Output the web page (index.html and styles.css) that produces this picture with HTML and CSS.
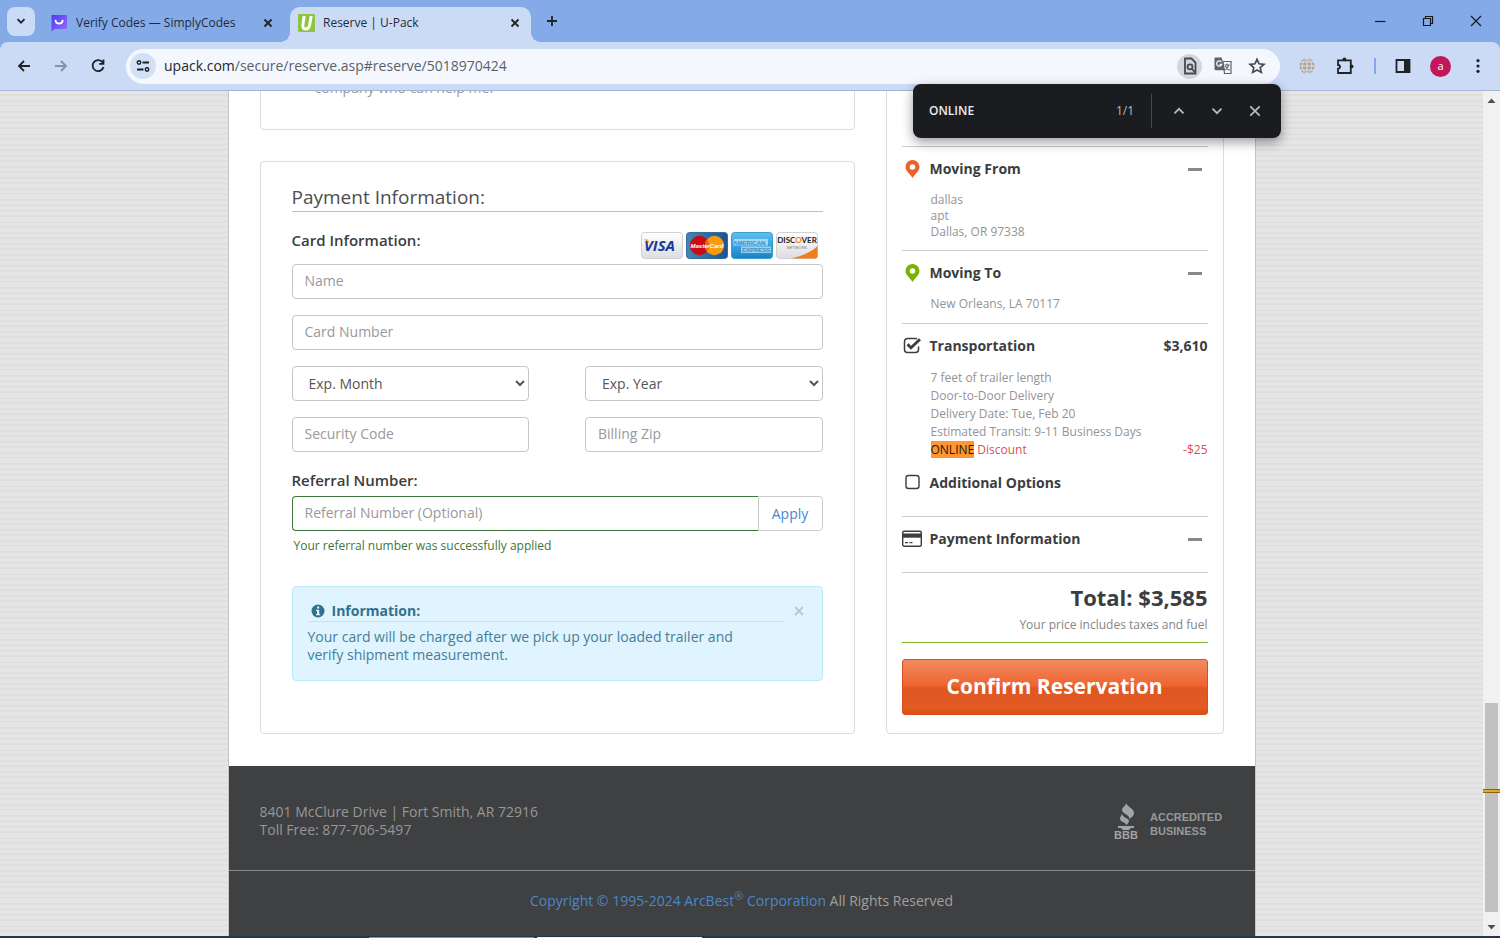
FILE: index.html
```html
<!DOCTYPE html>
<html lang="en">
<head>
<meta charset="utf-8">
<title>Reserve | U-Pack</title>
<link rel="stylesheet" href="styles.css">
</head>
<body>
<header class="browser">
  <div class="tabstrip">
    <button class="tab-search" aria-label="Search tabs"><svg width="12" height="12" viewBox="0 0 12 12"><path d="M2.500 4.200 6 7.700 9.500 4.200" class="ln2"/></svg></button>
    <div class="tab">
      <svg width="18" height="18" viewBox="0 0 18 18"><defs><linearGradient id="sc" x1="0" y1="0" x2="1" y2="1"><stop offset="0" stop-color="#4a3df0"/><stop offset="1" stop-color="#9a6bff"/></linearGradient></defs><path d="M1.500 1H16a1 1 0 0 1 1 1v12a1 1 0 0 1-1 1H5l-3.500 2.500z" fill="url(#sc)"/><path d="M5.500 6.500c.7 4.200 6.500 4.200 7.200 0" fill="none" stroke="#fff" stroke-width="1.700" stroke-linecap="round"/></svg>
      <span class="tab-title">Verify Codes — SimplyCodes</span>
      <button class="tab-close" aria-label="Close tab"><svg width="12" height="12" viewBox="0 0 12 12"><path d="M2.500 2.500l7 7m0-7l-7 7" class="ln2"/></svg></button>
    </div>
    <div class="tab active">
      <svg width="17" height="18" viewBox="0 0 17 18"><rect width="17" height="18" rx="1" fill="#8cc63f"/><path d="M6.200 2 5 10c-.6 3.400.3 5 2.800 5s3.500-1.600 4-5l1.400-8" fill="none" stroke="#fff" stroke-width="3"/></svg>
      <span class="tab-title">Reserve | U-Pack</span>
      <button class="tab-close" aria-label="Close tab"><svg width="12" height="12" viewBox="0 0 12 12"><path d="M2.500 2.500l7 7m0-7l-7 7" class="ln2"/></svg></button>
    </div>
    <button class="new-tab" aria-label="New tab"><svg width="14" height="14" viewBox="0 0 14 14"><path d="M7 2v10M2 7h10" class="ln2"/></svg></button>
    <div class="window-buttons">
      <button aria-label="Minimize"><svg width="12" height="12" viewBox="0 0 12 12"><path d="M1 6.500h10.500" class="ln1"/></svg></button>
      <button aria-label="Restore"><svg width="12" height="12" viewBox="0 0 12 12"><path d="M1.500 3.500h7v7h-7zM3.500 3.500v-2h7v7h-2" class="ln1"/></svg></button>
      <button aria-label="Close"><svg width="12" height="12" viewBox="0 0 12 12"><path d="M1 1l10 10M11 1 1 11" class="ln1"/></svg></button>
    </div>
  </div>
  <div class="toolbar">
    <div class="nav">
      <button aria-label="Back"><svg width="16" height="16" viewBox="0 0 16 16"><path d="M14 8H3M8 3 3 8l5 5" class="ln2"/></svg></button>
      <button class="dim" aria-label="Forward"><svg width="16" height="16" viewBox="0 0 16 16"><path d="M2 8h11M8 3l5 5-5 5" class="ln2"/></svg></button>
      <button aria-label="Reload"><svg width="16" height="16" viewBox="0 0 16 16"><path d="M12.700 4.500A5.500 5.500 0 1 0 13.500 9M13.500 1.500v4.300H9.200" class="ln2"/></svg></button>
    </div>
    <div class="omnibox">
      <button class="site-info" aria-label="Site information"><svg width="16" height="16" viewBox="0 0 16 16"><path d="M7.500 4.500H14M2 11.500h6.500" class="ln2"/><circle cx="4" cy="4.500" r="1.700" class="ln15"/><circle cx="12" cy="11.500" r="1.700" class="ln15"/></svg></button>
      <span class="url">upack.com<span>/secure/reserve.asp#reserve/5018970424</span></span>
      <button class="find-icon" aria-label="Find in page"><svg width="18" height="18" viewBox="0 0 18 18"><path d="M10.500 1.500H4v15h10.500v-11zM10.800 11.800l3.500 3.700" class="ln2g"/><circle cx="9" cy="9.800" r="2.500" class="ln2g"/></svg></button>
      <button class="translate" aria-label="Translate"><svg width="18" height="18" viewBox="0 0 18 18"><path d="M9 4.500h8v12h-6.500z" fill="none" stroke="#5f6368" stroke-width="1.200"/><path d="M1 .5h6.700l3.300 12.800H2a1.500 1.500 0 0 1-1.500-1.500V1z" fill="#5f6368"/><path d="M7.300 5A2.600 2.600 0 1 0 7.700 7.300H5.500" fill="none" stroke="#f3f7fd" stroke-width="1.300"/><path d="M10.500 8h5.200M13 6.500V8m1.700 0c-.4 2.200-2 4-3.300 5m0-4c.8 1.900 2.500 3.300 4.300 4.300" fill="none" stroke="#5f6368" stroke-width="1.200"/></svg></button>
      <button class="star" aria-label="Bookmark"><svg width="18" height="18" viewBox="0 0 18 18"><path d="M9 2.300l2 4.500 4.900.5-3.700 3.300 1.100 4.800L9 12.900l-4.300 2.500 1.100-4.800-3.700-3.300 4.900-.5z" fill="none" stroke="#474b50" stroke-width="1.700"/></svg></button>
    </div>
    <div class="extensions">
      <button aria-label="Globe extension"><svg width="18" height="18" viewBox="0 0 18 18"><circle cx="9" cy="9" r="7.700" fill="#a9a69e"/><path d="M9 1v16M1 9h16M2 5h14M2 13h14M9 1C2.500 5 2.500 13 9 17M9 1c6.500 4 6.500 12 0 16" fill="none" stroke="#e6e8ea" stroke-width=".9"/></svg></button>
      <button aria-label="Extensions"><svg width="20" height="20" viewBox="0 0 20 20"><path d="M3 4.300h12.800v12.700H3v-4.400c2.700-.2 2.700-3.400 0-3.600z" class="ln2"/><circle cx="9.400" cy="3.400" r="1.900" class="solid"/><circle cx="16.600" cy="10.400" r="1.900" class="solid"/></svg></button>
      <span class="sep"></span>
      <button aria-label="Side panel"><svg width="16" height="16" viewBox="0 0 16 16"><path d="M1.500 2h13v12h-13z" class="ln2"/><path d="M9 2h5.500v12H9z" class="solid"/></svg></button>
      <button class="avatar" aria-label="Profile">a</button>
      <button aria-label="Menu"><svg width="16" height="16" viewBox="0 0 16 16" class="solid"><circle cx="8" cy="2.700" r="1.600"/><circle cx="8" cy="8" r="1.600"/><circle cx="8" cy="13.300" r="1.600"/></svg></button>
    </div>
  </div>
  <div class="findbar">
    <input class="find-text" aria-label="Find" value="ONLINE">
    <span class="find-count">1/1</span>
    <button aria-label="Previous"><svg width="14" height="14" viewBox="0 0 14 14"><path d="M2.500 9.300 7 4.800l4.500 4.500"/></svg></button>
    <button aria-label="Next"><svg width="14" height="14" viewBox="0 0 14 14"><path d="M2.500 4.700 7 9.200l4.500-4.500"/></svg></button>
    <button aria-label="Close find bar"><svg width="14" height="14" viewBox="0 0 14 14"><path d="M2.300 2.300l9.400 9.400m0-9.400-9.400 9.400"/></svg></button>
  </div>
</header>

<div class="viewport">
  <div class="canvas">
    <div class="page">
      <div class="columns">
        <main class="forms">
          <section class="card previous"><p>company who can help me.</p></section>
          <section class="card payment">
            <h2>Payment Information:</h2>
            <div class="card-row">
              <h3>Card Information:</h3>
              <div class="logos">
                <svg width="42" height="27" viewBox="0 0 42 27"><defs><linearGradient id="gr" x1="0" y1="0" x2="0" y2="1"><stop offset="0" stop-color="#fff"/><stop offset="1" stop-color="#dcdde0"/></linearGradient></defs><rect x=".5" y=".5" width="41" height="26" rx="3" fill="url(#gr)" stroke="#cfd1d4"/><text x="3" y="19" class="visa">VISA</text><path d="M2.500 7.500H7l2 6c-1-3-3-5-6.500-6z" fill="#f0a01e"/></svg>
                <svg width="42" height="27" viewBox="0 0 42 27"><defs><linearGradient id="mc"><stop offset="0" stop-color="#4387b5"/><stop offset="1" stop-color="#1c5391"/></linearGradient></defs><rect x=".5" y=".5" width="41" height="26" rx="3" fill="url(#mc)" stroke="#2f6da3"/><circle cx="13.500" cy="13.500" r="9.700" fill="#cc0a12"/><circle cx="28.500" cy="13.500" r="9.700" fill="#fb9a0c"/><path d="M21 7.300a9.700 9.700 0 0 1 0 12.400 9.700 9.700 0 0 1 0-12.400" fill="#e56a12"/><text x="21" y="16" text-anchor="middle" class="master">MasterCard</text></svg>
                <svg width="42" height="27" viewBox="0 0 42 27"><defs><linearGradient id="ax" x1="0" y1="0" x2="0" y2="1"><stop offset="0" stop-color="#5fc0ee"/><stop offset="1" stop-color="#1683c9"/></linearGradient></defs><rect x=".5" y=".5" width="41" height="26" rx="3" fill="url(#ax)" stroke="#3b9bd3"/><path d="M3 7h34v6.500H2zM10 14.500h30V21H10z" fill="#d6eefa" opacity=".65"/><text x="2" y="13" class="amex">AMERICAN</text><text x="11" y="20" class="amex">EXPRESS</text></svg>
                <svg width="42" height="27" viewBox="0 0 42 27"><rect x=".5" y=".5" width="41" height="26" rx="3" fill="url(#gr)" stroke="#cfd1d4"/><path d="M15 26.500C27 24 37 19 41.500 14v10a2.500 2.500 0 0 1-2.500 2.500z" fill="#ef7d1a"/><text x="21" y="11" text-anchor="middle" class="disc">DISC<tspan fill="#ef7d1a">O</tspan>VER</text><text x="21" y="17" text-anchor="middle" class="net">NETWORK</text></svg>
              </div>
            </div>
            <div class="fields">
              <input class="field wide" aria-label="Name" placeholder="Name">
              <input class="field wide" aria-label="Card Number" placeholder="Card Number">
              <select class="field" aria-label="Exp. Month"><option>Exp. Month</option></select>
              <select class="field" aria-label="Exp. Year"><option>Exp. Year</option></select>
              <input class="field" aria-label="Security Code" placeholder="Security Code">
              <input class="field" aria-label="Billing Zip" placeholder="Billing Zip">
            </div>
            <label class="ref-label" for="ref">Referral Number:</label>
            <div class="ref-group">
              <input id="ref" class="field" placeholder="Referral Number (Optional)">
              <button class="apply">Apply</button>
            </div>
            <p class="success">Your referral number was successfully applied</p>
            <div class="alert">
              <div class="alert-body">
                <h4><svg width="14" height="14" viewBox="0 0 14 14"><circle cx="7" cy="7" r="6.500" fill="#31708f"/><path d="M6 2.500h2.200v2H6zM5 5.700h3.200v4.200h1v1.300H5V9.900h1V7H5z" fill="#dff4fe"/></svg>Information:</h4>
                <p>Your card will be charged after we pick up your loaded trailer and verify shipment measurement.</p>
              </div>
              <button class="alert-close" aria-label="Dismiss"><svg width="10" height="10" viewBox="0 0 10 10"><path d="M1 1l8 8m0-8-8 8" stroke="#b2cbd7" stroke-width="2"/></svg></button>
            </div>
          </section>
        </main>
        <aside class="card summary">
          <section>
            <h3><svg width="20" height="20" viewBox="0 0 20 20"><path d="M10.500 1a7 7 0 0 0-7 7c0 4 5 7.500 7 11 2-3.500 7-7 7-11a7 7 0 0 0-7-7z" fill="#e9622b"/><circle cx="10.500" cy="8" r="2.800" fill="#fff"/></svg>Moving From<button class="minus" aria-label="Collapse Moving From"></button></h3>
            <p>dallas<br>apt<br>Dallas, OR 97338</p>
          </section>
          <section class="to">
            <h3><svg width="20" height="20" viewBox="0 0 20 20"><path d="M10.500 1a7 7 0 0 0-7 7c0 4 5 7.500 7 11 2-3.500 7-7 7-11a7 7 0 0 0-7-7z" fill="#77b300"/><circle cx="10.500" cy="8" r="2.800" fill="#fff"/></svg>Moving To<button class="minus" aria-label="Collapse Moving To"></button></h3>
            <p>New Orleans, LA 70117</p>
          </section>
          <section class="transport">
            <h3><svg width="20" height="20" viewBox="0 0 20 20"><path d="M16.500 10.500v3a3 3 0 0 1-3 3h-8a3 3 0 0 1-3-3v-8a3 3 0 0 1 3-3h8c.7 0 1 .1 1.500.3" fill="none" stroke="#3b3d40" stroke-width="1.500"/><path d="M5.500 8.300 9 11.800l9-8.500" fill="none" stroke="#3b3d40" stroke-width="2.800"/></svg>Transportation<span class="price">$3,610</span></h3>
            <ul>
              <li>7 feet of trailer length</li>
              <li>Door-to-Door Delivery</li>
              <li>Delivery Date: Tue, Feb 20</li>
              <li>Estimated Transit: 9-11 Business Days</li>
              <li class="discount"><span><mark>ONLINE</mark> Discount</span><span>-$25</span></li>
            </ul>
            <h3><svg width="20" height="20" viewBox="0 0 20 20"><rect x="4" y="2.500" width="13" height="13" rx="2.500" fill="none" stroke="#3b3d40" stroke-width="1.400"/></svg>Additional Options</h3>
          </section>
          <section class="pay">
            <h3><svg width="20" height="20" viewBox="0 0 20 20"><rect x=".7" y="2.200" width="18.600" height="15" rx="1.500" fill="#fff" stroke="#3b3d40" stroke-width="1.400"/><path d="M1 4.500h18v4.200H1z" fill="#3b3d40"/><path d="M3 13.700h3m1.500 0h3" stroke="#3b3d40" stroke-width="1.300"/></svg>Payment Information<button class="minus" aria-label="Collapse Payment Information"></button></h3>
          </section>
          <section class="total">
            <strong>Total: $3,585</strong>
            <small>Your price includes taxes and fuel</small>
          </section>
          <button class="confirm">Confirm Reservation</button>
        </aside>
      </div>
      <footer>
        <div class="foot-top">
          <address>8401 McClure Drive | Fort Smith, AR 72916<br>Toll Free: 877-706-5497</address>
          <svg width="110" height="40" viewBox="0 0 110 40"><g fill="#a3a4a5"><path d="M12 0c1 4 8 5 8 10 0 3-3 5-5 6 2-4-7-5-7-9 0-3 4-4 4-7z"/><path d="M8 11c1 4 7 4 7 7 0 1.500-1.500 3-3 4 0-3-6-3-6-6 0-2 1-3 2-5z"/><path d="M4 23h16v2h-3l-2 2H9l-2-2H4z"/></g><text x="0" y="36" class="bbb">BBB</text><text x="36" y="18" class="acc">ACCREDITED</text><text x="36" y="32" class="acc">BUSINESS</text></svg>
        </div>
        <p class="copy"><a href="#">Copyright © 1995-2024 ArcBest<sup>®</sup> Corporation</a> All Rights Reserved</p>
      </footer>
    </div>
  </div>
  <div class="scrollbar">
    <svg width="17" height="17" viewBox="0 0 17 17"><path d="M4.500 12h8l-4-4.500z" fill="#505050"/></svg>
    <div class="track"><div class="thumb"></div><div class="match"></div></div>
    <svg width="17" height="17" viewBox="0 0 17 17"><path d="M4.500 6h8l-4 4.500z" fill="#505050"/></svg>
  </div>
</div>
<div class="taskbar"><span></span><span class="current"></span></div>
</body>
</html>
```

FILE: styles.css
```css
* { box-sizing: border-box; }
body {
  margin: 0;
  height: 100vh;
  display: flex;
  flex-direction: column;
  overflow: hidden;
  font: 14px/18px "Open Sans", "Noto Sans", sans-serif;
  color: #3b3d40;
}
button { border: 0; padding: 0; background: none; font: inherit; color: inherit; display: grid; place-items: center; }
h2, h3, h4, p, ul { margin: 0; padding: 0; }
svg { display: block; flex: none; }

/* Browser frame */
.browser { position: relative; z-index: 2; flex: none; background: #84abe8; }
.ln1 { fill: none; stroke: #17191c; stroke-width: 1.2; }
.ln15 { fill: none; stroke: #202226; stroke-width: 1.5; }
.ln2 { fill: none; stroke: #202226; stroke-width: 1.8; }
.ln2g { fill: none; stroke: #474b50; stroke-width: 1.8; }
.solid { fill: #202226; }
.tabstrip { height: 42px; display: flex; align-items: center; padding-left: 7px; font-size: 12px; color: #1f2a3c; }
.tab-search { width: 28px; height: 29px; border-radius: 8px; background: #cbdbf5; }
.tab { width: 255px; height: 35px; align-self: flex-end; display: flex; align-items: center; gap: 8px; padding: 0 16px 4px 15px; }
.tab-title { flex: 1; white-space: nowrap; }
.tab.active { width: 241px; padding: 0 10px 4px 8px; background: #cbdbf5; border-radius: 10px 10px 0 0; position: relative; }
.tab.active::before, .tab.active::after { content: ""; position: absolute; bottom: 0; width: 10px; height: 10px; }
.tab.active::before { left: -10px; background: radial-gradient(circle at 0 0, transparent 10px, #cbdbf5 10px); }
.tab.active::after { right: -10px; background: radial-gradient(circle at 100% 0, transparent 10px, #cbdbf5 10px); }
.new-tab { width: 28px; height: 28px; margin-left: 7px; }
.window-buttons { margin-left: auto; display: flex; }
.window-buttons button { width: 48px; height: 28px; }

.toolbar { height: 49px; display: flex; align-items: center; background: #cbdbf5; border-bottom: 1px solid #a3b5d6; border-radius: 8px 8px 0 0; padding: 0 14px 0 5px; }
.nav { display: flex; }
.nav button { width: 37px; height: 30px; }
.nav .dim { opacity: .4; }
.omnibox { flex: 1; height: 35px; margin-left: 10px; border-radius: 18px; background: #f4f8fe; display: flex; align-items: center; padding: 0 11px 0 4px; }
.site-info { width: 26px; height: 26px; border-radius: 50%; background: #d3e1f7; }
.url { flex: 1; margin-left: 8px; color: #24272b; }
.url span { color: #5b5f66; }
.omnibox button + button { margin-left: 9px; }
.find-icon { width: 25px; height: 25px; border-radius: 50%; background: #d3d6db; }
.translate { width: 24px; height: 24px; }
.star { width: 25px; height: 25px; }
.extensions { display: flex; align-items: center; margin-left: 18px; gap: 19px; }
.sep { width: 2px; height: 16px; background: #84abe8; }
.extensions .avatar { width: 21px; height: 21px; border-radius: 50%; background: #c2185b; color: #fff; font-size: 11px; line-height: 14px; }

.findbar { position: absolute; right: 219px; top: 84px; width: 368px; height: 54px; display: flex; align-items: center; padding: 0 7px 0 16px; border-radius: 8px; background: #1b1c1f; box-shadow: 0 4px 12px rgba(0, 0, 0, .4); color: #b9bcc0; font-size: 12px; }
.find-text { flex: 1; min-width: 0; border: 0; padding: 0; background: none; color: #eceef0; font: 600 12px/18px "Open Sans", sans-serif; }
.find-count { padding-right: 17px; margin-right: 8px; border-right: 1px solid #45484c; line-height: 34px; }
.findbar button { width: 38px; height: 38px; }
.findbar path { fill: none; stroke: #b9bcc0; stroke-width: 1.7; }

/* Scrolled page */
.viewport { flex: 1; min-height: 0; display: flex; overflow: hidden; }
.canvas { flex: 1; overflow: hidden; background: repeating-linear-gradient(#e5e5e5 0 3px, #dfdfdf 3px 5px, #e5e5e5 5px 9px, #dfdfdf 9px 11px); }
.page { max-width: 1028px; min-height: 100%; margin: 0 auto; background: #fff; border: solid #c4c4c4; border-width: 0 1px; display: flex; flex-direction: column; }
.columns { display: grid; grid-template-columns: 595fr 338fr; gap: 31px; margin-top: -20px; padding: 0 31px 32px; }
.forms { display: flex; flex-direction: column; gap: 31px; }
.card { border: 1px solid #dcdcdc; border-radius: 4px; }
.previous { padding: 7px 54px 32px; color: #999; }
.payment { flex: 1; padding: 21px 31px 31px; }
h2 { font-size: 19px; line-height: 28px; font-weight: 400; color: #4c4e50; border-bottom: 1px solid #bfbfbf; }
h3, .ref-label { font-size: 15px; line-height: 20px; font-weight: 600; }
.card-row { display: flex; justify-content: space-between; align-items: flex-start; padding: 18px 5px 5px 0; }
.logos { display: flex; gap: 3px; padding-top: 2px; }
.visa { font: italic 700 15px "Open Sans", sans-serif; fill: #15399b; }
.master { font: italic 700 6px "Liberation Sans", sans-serif; fill: #fff; }
.amex { font: 700 6px "Liberation Sans", sans-serif; fill: #2a93d2; }
.disc { font: 700 8px Lato, sans-serif; fill: #222; }
.net { font: 4px "Liberation Sans", sans-serif; fill: #777; }
.fields { display: grid; grid-template-columns: 1fr 1fr; gap: 16px 56px; margin-bottom: 18px; }
.wide { grid-column: span 2; }
.field { width: 100%; height: 35px; border: 1px solid #c6c6c6; border-radius: 4px; padding: 0 12px 2px; background: #fff; color: #555; font: 14px/18px "Open Sans", sans-serif; }
select.field { padding-bottom: 0; }
.field::placeholder { color: #999; opacity: 1; }
.ref-label { display: block; margin-bottom: 6px; }
.ref-group { display: flex; }
.ref-group .field { flex: 1; border-color: #3c763d; border-right: 0; border-radius: 4px 0 0 4px; }
.apply { width: 65px; border: 1px solid #ccc; border-radius: 0 4px 4px 0; color: #4a86cf; }
.success { margin: 6px 2px 31px; font-size: 12px; color: #3c763d; }
.alert { display: flex; align-items: flex-start; padding: 15px 15px 16px; border: 1px solid #bcebf5; border-radius: 4px; background: #dff4fe; color: #31708f; }
.alert-body { flex: 1; }
.alert h4 { display: flex; align-items: center; gap: 7px; padding: 0 3px 1px; margin-bottom: 6px; font-size: 14px; line-height: 18px; border-bottom: 1px solid #c2e3ef; }
.alert p { padding-right: 24px; color: #457e99; }
.alert-close { width: 16px; height: 18px; margin-left: 7px; }

.summary { padding: 74px 15px 18px; display: flex; flex-direction: column; }
.summary section { border-top: 1px solid #ccc; padding: 12px 0 10px; }
.summary h3 { display: flex; align-items: center; gap: 8px; font-size: 14px; font-weight: 700; }
.minus { width: 14px; height: 3px; margin: 0 6px 0 auto; background: #888; }
.price { margin-left: auto; }
.summary p, .summary ul { margin: 13px 0 0 29px; font-size: 12px; line-height: 16px; color: #949494; }
.summary ul { margin-bottom: 14px; list-style: none; line-height: 18px; }
.discount { display: flex; justify-content: space-between; color: #d9534f; }
mark { background: #ff9632; color: #26180a; }
.summary .to { padding-bottom: 11px; }
.summary .transport, .summary .pay { padding-bottom: 23px; }
.summary .total { padding: 9px 0 8px; margin-bottom: 16px; border-bottom: 1px solid #7fb32c; display: flex; flex-direction: column; gap: 4px; text-align: right; }
.total strong { font-size: 22px; line-height: 30px; }
.total small { font-size: 12px; color: #858585; }
.confirm { height: 56px; border: 1px solid #d4501c; border-radius: 3px; background: linear-gradient(#f28a60, #ee6430 48%, #de5721 52%, #e35a25 88%, #d94f12); color: #fff; font-size: 21px; font-weight: 700; padding-bottom: 2px; }

footer { flex: 1; background: #3f4041; color: #979797; }
.foot-top { display: flex; justify-content: space-between; align-items: flex-start; padding: 37px 31px 27px; border-bottom: 1px solid #8b8b8b; }
address { font-style: normal; }
.copy { padding: 21px 0 26px; text-align: center; color: #a0a0a0; }
.copy a { color: #4a88c8; text-decoration: none; }
sup { font-size: 11px; line-height: 0; }
.bbb { font: 700 11px "Liberation Sans", sans-serif; fill: #a3a4a5; }
.acc { font: 700 11px "Liberation Sans", sans-serif; fill: #979899; }

.scrollbar { width: 17px; display: flex; flex-direction: column; background: #f1f1f1; }
.track { flex: 1; position: relative; display: flex; flex-direction: column; justify-content: flex-end; padding: 0 2px 7px; }
.thumb { height: 26%; background: #c1c1c1; }
.match { position: absolute; left: 0; right: 0; top: 84%; height: 4px; background: #e8a51e; border: solid #87661c; border-width: 1px 0; }
.taskbar { flex: none; height: 2px; background: #26344f; display: flex; padding-left: 369px; gap: 3px; }
.taskbar span { width: 165px; height: 1px; margin-top: 1px; background: #8a93a0; }
.taskbar .current { background: #f0f0f0; }
```
